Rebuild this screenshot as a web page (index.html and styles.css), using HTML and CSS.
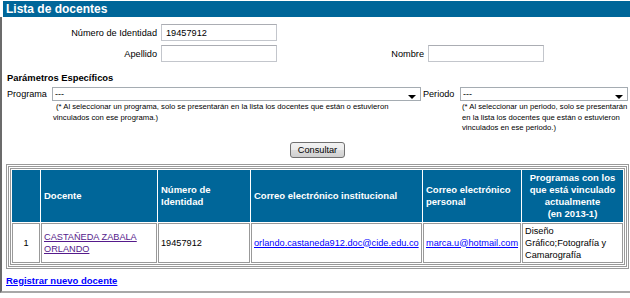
FILE: index.html
```html
<!DOCTYPE html>
<html>
<head>
    <title>Lista de docentes</title>
    <link rel="stylesheet" href="styles.css">
</head>
<body>
    <div class="titlebar">Lista de docentes</div>
    <div class="panel">
        <div class="search">
            <label for="identidad">Número de Identidad</label>
            <input type="text" id="identidad" class="first" value="19457912">
            <label for="apellido">Apellido</label>
            <input type="text" id="apellido">
            <label for="nombre">Nombre</label>
            <input type="text" id="nombre">
        </div>

        <h3 class="params-title">Parámetros Específicos</h3>
        <div class="params">
            <label for="programa">Programa</label>
            <div class="field">
                <div class="select">
                    <select id="programa"><option value="">---</option></select>
                    <span class="arrow"></span>
                </div>
                <p class="note note-first">(* Al seleccionar un programa, solo se presentarán en la lista los docentes que están o estuvieron<br>vinculados con ese programa.)</p>
            </div>
            <label for="periodo">Periodo</label>
            <div class="field">
                <div class="select">
                    <select id="periodo"><option value="">---</option></select>
                    <span class="arrow"></span>
                </div>
                <p class="note">(* Al seleccionar un periodo, solo se presentarán<br>en la lista los docentes que están o estuvieron<br>vinculados en ese periodo.)</p>
            </div>
        </div>

        <div class="actions">
            <button type="button">Consultar</button>
        </div>

        <div class="results">
            <table>
                <tr>
                    <th class="c-num"></th>
                    <th class="c-docente">Docente</th>
                    <th class="c-id">Número de Identidad</th>
                    <th class="c-inst">Correo electrónico institucional</th>
                    <th class="c-pers">Correo electrónico personal</th>
                    <th class="c-prog">Programas con los que está vinculado actualmente<br>(en 2013-1)</th>
                </tr>
                <tr>
                    <td class="num">1</td>
                    <td><a href="#" class="visited">CASTAÑEDA ZABALA ORLANDO</a></td>
                    <td>19457912</td>
                    <td><a href="#">orlando.castaneda912.doc@cide.edu.co</a></td>
                    <td><a href="#">marca.u@hotmail.com</a></td>
                    <td>Diseño Gráfico;Fotografía y Camarografía</td>
                </tr>
            </table>
        </div>

        <div class="footer">
            <a href="#" class="new-link">Registrar nuevo docente</a>
        </div>
    </div>
</body>
</html>
```

FILE: styles.css
```css
body {
    font-family: "Liberation Sans", Arial, sans-serif;
    font-size: 9.2px;
    margin: 0;
    padding: 0;
    color: #000;
    background-color: #fff;
}

.titlebar {
    margin: 1px 0 0 3px;
    padding-left: 3px;
    height: 16px;
    line-height: 16px;
    background-color: #006699;
    color: #fff;
    font-size: 12px;
    font-weight: bold;
}

.panel {
    border-left: 2px solid #6b6b6b;
    border-bottom: 2px solid #a8a8a8;
    padding-bottom: 4px;
}

/* search fields */
.search {
    display: grid;
    grid-template-columns: 155px 116px 143px 116px;
    column-gap: 4px;
    row-gap: 4px;
    align-items: center;
    padding-top: 7px;
}

.search label {
    text-align: right;
}

.search input {
    box-sizing: border-box;
    width: 116px;
    height: 17px;
    margin: 0;
    padding: 0 4px;
    border: 1px solid #c3c6cc;
    border-top-color: #abadb3;
    font-family: inherit;
    font-size: 9.2px;
}

.search .first {
    grid-column: span 3;
}

/* specific params */
.params-title {
    margin: 10px 0 3px 5px;
    font-size: 9.4px;
    line-height: 12px;
    font-weight: bold;
}

.params {
    display: grid;
    grid-template-columns: 43px 369px 35px 168px;
    column-gap: 2px;
    padding-left: 5px;
}

.params label {
    font-size: 9.1px;
    line-height: 14px;
}

.select {
    position: relative;
    box-sizing: border-box;
    height: 14px;
    border: 1px solid #a5acb2;
    background-color: #fff;
}

.select select {
    -webkit-appearance: none;
    appearance: none;
    display: block;
    width: 100%;
    height: 12px;
    margin: 0;
    padding: 0 0 0 2px;
    border: 0;
    background: transparent;
    font-family: inherit;
    font-size: 9px;
    line-height: 12px;
}

.select .arrow {
    position: absolute;
    right: 4px;
    bottom: 1px;
    width: 0;
    height: 0;
    border-left: 4px solid transparent;
    border-right: 4px solid transparent;
    border-top: 4px solid #000;
}

.note {
    margin: 1px 0 0;
    padding-left: 2px;
    font-size: 7.7px;
    line-height: 10.5px;
}

.note-first {
    margin-left: -1px;
    text-indent: 3px;
}

/* button */
.actions {
    margin-top: 8px;
    text-align: center;
}

.actions button {
    height: 16px;
    margin-left: 3px;
    padding: 0 7px;
    border: 1px solid #707070;
    border-radius: 3px;
    background: linear-gradient(#f2f2f2, #ebebeb 50%, #dddddd 50%, #cfcfcf);
    font-family: inherit;
    font-size: 9.2px;
    color: #000;
}

/* results grid */
.results {
    margin: 6px 1px 0 4px;
    padding: 1px;
    border: 1px solid #999;
}

table {
    width: 100%;
    table-layout: fixed;
    border: 3px double #999;
    border-spacing: 1px;
}

th, td {
    box-sizing: border-box;
    padding: 1px 2px;
    border: 1px solid #999;
    line-height: 12px;
    vertical-align: middle;
    text-align: left;
}

th {
    background-color: #006699;
    border-color: #006699;
    color: #fff;
    font-size: 9.5px;
    font-weight: bold;
}

td {
    font-size: 9.2px;
}

.c-num { width: 28px; }
.c-docente { width: 116px; }
.c-id { width: 92px; }
.c-inst { width: 171px; }
.c-pers { width: 98px; }
.c-prog {
    width: 101px;
    text-align: center;
}

td.num {
    text-align: center;
}

a {
    color: #0000ff;
}

a.visited {
    color: #551a8b;
}

.footer {
    margin: 6px 0 0 4px;
    line-height: 12px;
}

.new-link {
    font-size: 9.5px;
    font-weight: bold;
}
```
